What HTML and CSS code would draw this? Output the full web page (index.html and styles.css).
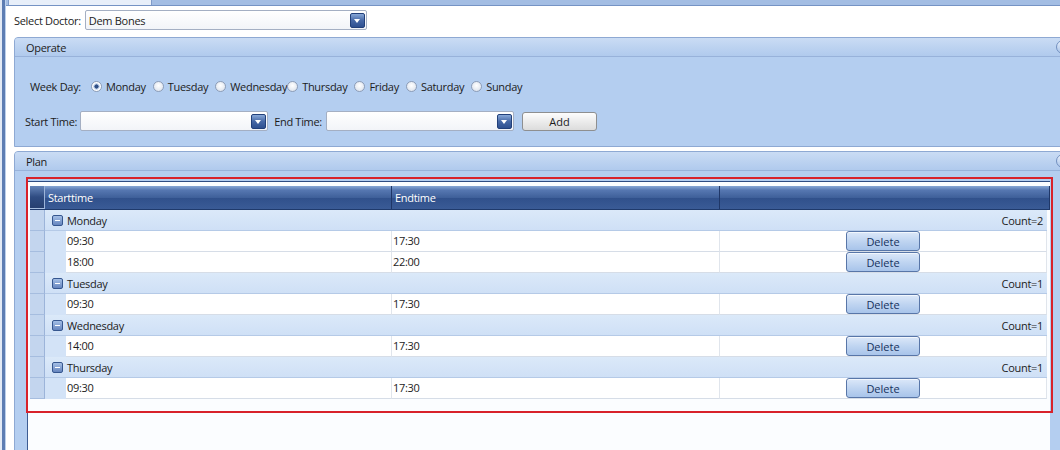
FILE: index.html
```html
<!DOCTYPE html>
<html lang="en">
<head>
  <meta charset="UTF-8">
  <title>Doctor Plan</title>
  <link rel="stylesheet" href="styles.css">
</head>
<body>
  <div class="app">
    <div class="rail"></div>
    <div class="main">
      <div class="tabstrip"><div class="tab"></div></div>

      <div class="content">
        <div class="doctor-row">
          <label>Select Doctor:</label>
          <div class="combo combo-doctor"><span>Dem Bones</span><i class="drop"></i></div>
        </div>

        <section class="panel operate">
          <div class="panel-head">Operate<span class="collapse"></span></div>
          <div class="panel-body">
            <div class="weekday-row">
              <span class="lbl">Week Day:</span>
              <span class="radio checked">Monday</span>
              <span class="radio">Tuesday</span>
              <span class="radio tight">Wednesday</span>
              <span class="radio">Thursday</span>
              <span class="radio">Friday</span>
              <span class="radio">Saturday</span>
              <span class="radio">Sunday</span>
            </div>
            <div class="time-row">
              <span class="lbl">Start Time:</span>
              <div class="combo combo-time"><span></span><i class="drop"></i></div>
              <span class="lbl end-lbl">End Time:</span>
              <div class="combo combo-time"><span></span><i class="drop"></i></div>
              <button class="btn-add">Add</button>
            </div>
          </div>
        </section>

        <section class="panel plan">
          <div class="panel-head">Plan<span class="collapse"></span></div>
          <div class="panel-body">
            <div class="grid">
              <div class="grid-head">
                <div class="hcell indent"></div>
                <div class="hcell">Starttime</div>
                <div class="hcell">Endtime</div>
                <div class="hcell"></div>
              </div>

              <div class="group">
                <div class="indent"></div>
                <div class="group-cell"><i class="expander"></i>Monday<span class="count">Count=2</span></div>
              </div>
              <div class="data">
                <div class="indent"></div><div class="gap"></div>
                <div class="cell">09:30</div><div class="cell">17:30</div>
                <div class="cell action"><button class="btn-delete">Delete</button></div>
              </div>
              <div class="data">
                <div class="indent"></div><div class="gap"></div>
                <div class="cell">18:00</div><div class="cell">22:00</div>
                <div class="cell action"><button class="btn-delete">Delete</button></div>
              </div>

              <div class="group">
                <div class="indent"></div>
                <div class="group-cell"><i class="expander"></i>Tuesday<span class="count">Count=1</span></div>
              </div>
              <div class="data">
                <div class="indent"></div><div class="gap"></div>
                <div class="cell">09:30</div><div class="cell">17:30</div>
                <div class="cell action"><button class="btn-delete">Delete</button></div>
              </div>

              <div class="group">
                <div class="indent"></div>
                <div class="group-cell"><i class="expander"></i>Wednesday<span class="count">Count=1</span></div>
              </div>
              <div class="data">
                <div class="indent"></div><div class="gap"></div>
                <div class="cell">14:00</div><div class="cell">17:30</div>
                <div class="cell action"><button class="btn-delete">Delete</button></div>
              </div>

              <div class="group">
                <div class="indent"></div>
                <div class="group-cell"><i class="expander"></i>Thursday<span class="count">Count=1</span></div>
              </div>
              <div class="data">
                <div class="indent"></div><div class="gap"></div>
                <div class="cell">09:30</div><div class="cell">17:30</div>
                <div class="cell action"><button class="btn-delete">Delete</button></div>
              </div>
            </div>
            <div class="highlight"></div>
          </div>
        </section>
      </div>
    </div>
  </div>
</body>
</html>
```

FILE: styles.css
```css
body {
  margin: 0;
  font-family: "Open Sans", "Liberation Sans", sans-serif;
  font-size: 11px;
  letter-spacing: -0.3px;
  color: #1c1c1c;
  background: #fff;
  overflow: hidden;
}
.app {
  display: flex;
  height: 450px;
  overflow: hidden;
}
.rail {
  width: 6px;
  flex: none;
  background: linear-gradient(to right, #e3eaf5 0 2px, #5d7db3 2px 5px, #bcd0ec 5px 6px);
}
.main {
  flex: 1;
  min-width: 0;
}
.tabstrip {
  height: 5px;
  display: flex;
  background: #a3bde3;
  border-bottom: 1px solid #7593c4;
}
.tab {
  width: 142px;
  margin-left: 2px;
  background: #e8eff9;
  border-left: 1px solid #7f9bc9;
  border-right: 1px solid #7f9bc9;
}
.content {
  padding-left: 8px;
}
.doctor-row {
  display: flex;
  align-items: center;
  height: 20px;
  padding: 4px 0 7px;
}
.doctor-row label {
  margin-right: 4px;
}
.combo {
  display: flex;
  align-items: center;
  justify-content: space-between;
  height: 20px;
  box-sizing: border-box;
  border: 1px solid #a4afc3;
  border-radius: 2px;
  background: linear-gradient(#fff, #f2f4f8);
  padding: 0 1px 0 3px;
}
.combo-doctor {
  width: 282px;
}
.combo-time {
  width: 188px;
}
.drop {
  position: relative;
  width: 15px;
  height: 15px;
  box-sizing: border-box;
  border: 1px solid #22407a;
  border-radius: 2px;
  background: linear-gradient(#88a8d8, #4668a6 50%, #2e5090);
}
.drop::after {
  content: '';
  position: absolute;
  left: 3px;
  top: 5px;
  border-left: 3.5px solid transparent;
  border-right: 3.5px solid transparent;
  border-top: 4px solid #fff;
}
.panel {
  margin-right: -6px;
  border: 1px solid #8ea9d3;
  border-radius: 4px 0 0 0;
  background: #b4cef0;
}
.panel-head {
  display: flex;
  align-items: center;
  height: 18px;
  padding-left: 11px;
  background: linear-gradient(#cadcf4, #b0caed);
  border-bottom: 1px solid #98b2da;
  border-radius: 3px 0 0 0;
}
.collapse {
  margin-left: auto;
  margin-right: -5px;
  width: 14px;
  height: 14px;
  box-sizing: border-box;
  border-radius: 50%;
  border: 1px solid #7290bf;
  background: linear-gradient(#e8f0fb, #a9c3e8);
}
.operate .panel-body {
  height: 89px;
  box-sizing: border-box;
  padding-top: 20px;
}
.weekday-row {
  display: flex;
  align-items: center;
  height: 18px;
  padding-left: 15px;
}
.weekday-row .lbl {
  margin-right: 10px;
}
.radio {
  display: inline-flex;
  align-items: center;
  margin-right: 7px;
}
.radio.tight {
  margin-right: 0;
}
.radio::before {
  content: '';
  width: 11px;
  height: 11px;
  margin-right: 4px;
  box-sizing: border-box;
  border-radius: 50%;
  border: 1px solid #8d9db7;
  background: radial-gradient(circle at 50% 40%, #fff, #d5dde9);
}
.radio.checked::before {
  background: radial-gradient(circle, #2f4f86 0 1.8px, #cddbef 2.4px 3px, #fff 3.6px);
}
.time-row {
  display: flex;
  align-items: center;
  height: 20px;
  margin-top: 16px;
  padding-left: 10px;
}
.time-row .lbl {
  margin-right: 3px;
}
.time-row .end-lbl {
  margin-left: 6px;
  margin-right: 4px;
}
.btn-add {
  margin-left: 8px;
  width: 75px;
  height: 19px;
  padding: 0;
  font: inherit;
  color: #1c1c1c;
  border: 1px solid #8e8f90;
  border-radius: 3px;
  background: linear-gradient(#fdfdfd, #ececec 50%, #dcdcdc);
}
.plan {
  margin-top: 4px;
}
.plan .panel-body {
  position: relative;
  height: 280px;
  box-sizing: border-box;
  padding: 10px 0 0 12px;
  overflow: hidden;
}
.grid {
  width: 1023px;
  height: 270px;
  box-sizing: border-box;
  padding: 4px 0 0 2px;
  background: #fbfdff;
  border-left: 1px solid #3d5c92;
  border-top: 1px solid #2e4c82;
}
.grid-head {
  display: grid;
  grid-template-columns: 15px 347px 328px 1fr;
  height: 24px;
  box-sizing: border-box;
  border-bottom: 1px solid #1f3a6c;
  color: #fff;
  background: linear-gradient(#86a6d5, #5677b1 18%, #3f609a 50%, #30508b 52%, #3a5b96);
}
.hcell {
  line-height: 23px;
  padding-left: 3px;
  border-right: 1px solid #1f3768;
}
.hcell.indent {
  padding: 0;
  background: linear-gradient(#6484b8, #2f4c82 50%, #263f70);
}
.group,
.data {
  display: grid;
  height: 21px;
  margin-right: 3px;
}
.group {
  grid-template-columns: 15px 1fr;
}
.data {
  grid-template-columns: 15px 21px 326px 328px 1fr;
}
.indent {
  box-sizing: border-box;
  background: #c3d5ee;
  border-bottom: 1px solid #a6bddf;
  border-right: 1px solid #9cb4d9;
}
.gap {
  background: #d3e3f7;
}
.group-cell {
  display: flex;
  align-items: center;
  padding: 0 4px 0 7px;
  background: linear-gradient(#dbe9f9, #cfe0f6);
  border-bottom: 1px solid #b5cae7;
}
.expander {
  position: relative;
  width: 11px;
  height: 11px;
  margin-right: 4px;
  box-sizing: border-box;
  border: 1px solid #35568f;
  border-radius: 2px;
  background: linear-gradient(#a4bfe6, #6685be);
}
.expander::after {
  content: '';
  position: absolute;
  left: 2px;
  right: 2px;
  top: 4px;
  height: 1px;
  background: #fff;
}
.count {
  margin-left: auto;
}
.cell {
  padding-left: 1px;
  line-height: 20px;
  background: #fff;
  border-bottom: 1px solid #d6dde7;
  border-right: 1px solid #e0e5ec;
}
.cell.action {
  display: flex;
  justify-content: center;
  align-items: center;
  padding: 0;
}
.btn-delete {
  width: 74px;
  height: 20px;
  padding: 0;
  font: inherit;
  color: #16325e;
  border: 1px solid #5876a8;
  border-radius: 3px;
  background: linear-gradient(#dce8f9, #c0d5f1 50%, #a8c4ea);
  box-shadow: inset 0 1px 0 #f2f7fd;
}
.highlight {
  position: absolute;
  left: 11px;
  top: 6px;
  width: 1027px;
  height: 236px;
  box-sizing: border-box;
  border: 2px solid #d8222b;
  pointer-events: none;
}
```
